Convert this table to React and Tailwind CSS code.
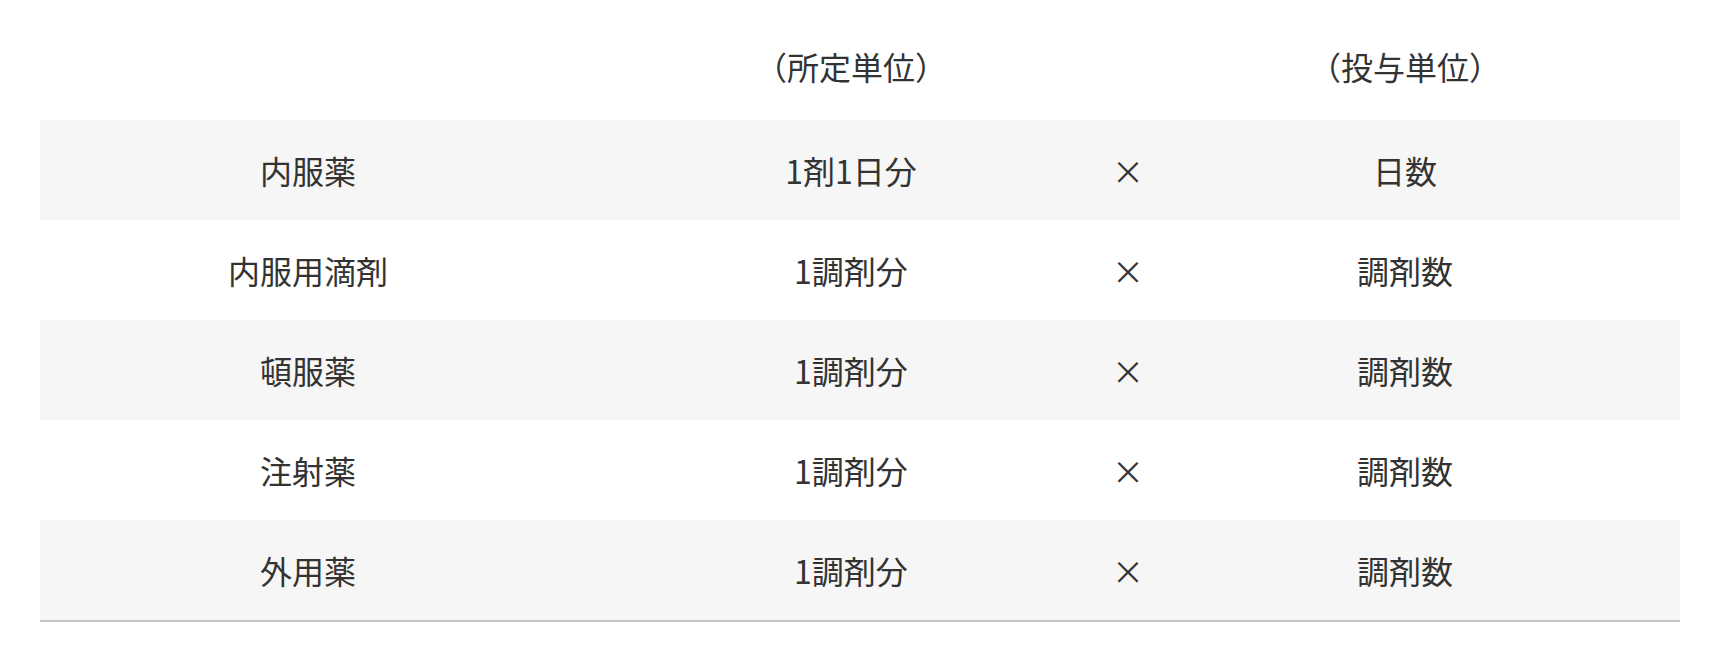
import React from 'react';

const rows = [
  { name: '内服薬', unit: '1剤1日分', count: '日数' },
  { name: '内服用滴剤', unit: '1調剤分', count: '調剤数' },
  { name: '頓服薬', unit: '1調剤分', count: '調剤数' },
  { name: '注射薬', unit: '1調剤分', count: '調剤数' },
  { name: '外用薬', unit: '1調剤分', count: '調剤数' },
];

const cols = 'grid grid-cols-[536px_550px_4px_1fr]';

export default function App() {
  return (
    <div
      className="min-h-screen bg-white px-[40px] text-[32px] leading-normal text-[#333333]"
      style={{ fontFamily: '"Noto Sans CJK JP", "Noto Sans", sans-serif' }}
    >
      {/* header */}
      <div className={`${cols} h-[120px] pt-[12px]`}>
        <div />
        <div className="flex items-center justify-center">（所定単位）</div>
        <div />
        <div className="flex items-center justify-center">（投与単位）</div>
      </div>

      <div className="border-b-2 border-[#c4c4c4]">
        {rows.map((row, i) => (
          <div
            key={row.name}
            className={`${cols} h-[100px] ${i % 2 === 0 ? 'bg-[#f6f6f6]' : 'bg-white'}`}
          >
            <div className="flex items-center justify-center">{row.name}</div>
            <div className="flex items-center justify-center">{row.unit}</div>
            <div className="flex items-center justify-center whitespace-nowrap">×</div>
            <div className="flex items-center justify-center">{row.count}</div>
          </div>
        ))}
      </div>
    </div>
  );
}
